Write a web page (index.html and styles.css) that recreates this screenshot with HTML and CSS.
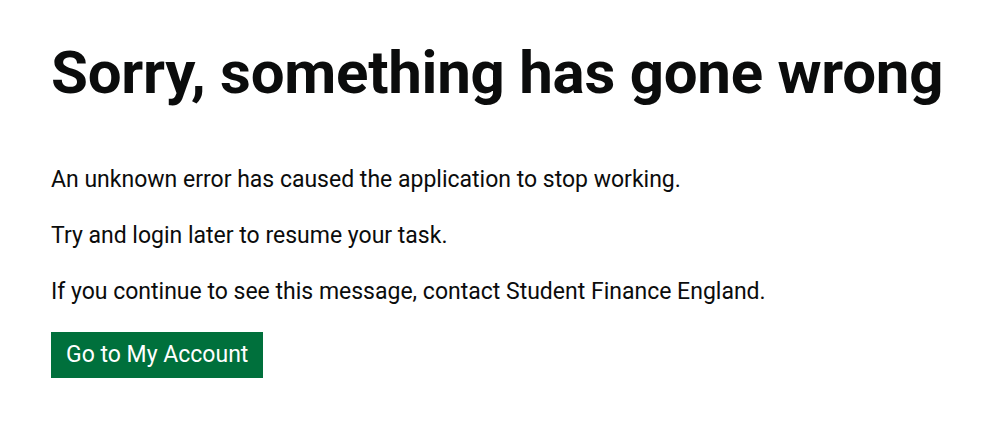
FILE: index.html
```
<!DOCTYPE html>
<html lang="en">

<head>
    <meta charset="UTF-8">
    <meta name="viewport" content="width=device-width, initial-scale=1.0">
    <title>Sorry, something has gone wrong</title>
    <link rel="stylesheet" href="styles.css">
</head>

<body>
    <main class="wrap">
        <h1 class="heading">Sorry, something has gone wrong</h1>

        <div class="body">
            <p>An unknown error has caused the application to stop working.</p>
            <p>Try and login later to resume your task.</p>
            <p>If you continue to see this message, contact Student Finance England.</p>
        </div>

        <a href="#" class="btn">Go to My Account</a>
    </main>
</body>

</html>
```

FILE: styles.css
```
* {
    margin: 0;
    padding: 0;
    box-sizing: border-box;
}

body {
    background-color: #fff;
    color: #0b0c0c;
    font-family: Roboto, "Liberation Sans", Arial, sans-serif;
}

.wrap {
    display: flex;
    flex-direction: column;
    align-items: flex-start;
    padding: 40px 51px 0;
}

.heading {
    font-size: 60px;
    font-weight: 700;
    line-height: 66px;
    letter-spacing: -0.25px;
}

.body {
    display: flex;
    flex-direction: column;
    gap: 27px;
    margin-top: 59px;
}

.body p {
    font-size: 23px;
    line-height: 29px;
}

.btn {
    display: block;
    margin-top: 26px;
    padding: 8px 15px;
    font-size: 23px;
    line-height: 30px;
    color: #fff;
    text-decoration: none;
    background-color: #00703c;
    box-shadow: 0 3px 0 #002d18;
}
```
